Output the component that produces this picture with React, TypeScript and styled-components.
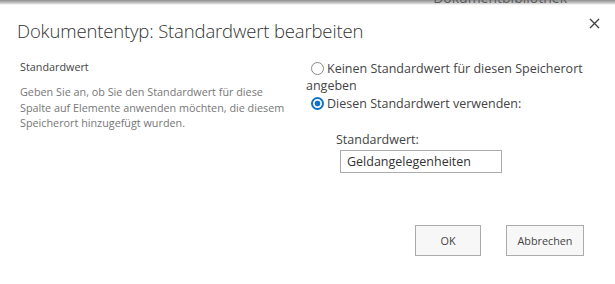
import React from "react";
import styled, { createGlobalStyle } from "styled-components";

const Global = createGlobalStyle`
  html, body { margin: 0; padding: 0; background: #fff; }
  body {
    width: 615px;
    height: 284px;
    overflow: hidden;
    font-family: "Open Sans", "Noto Sans", sans-serif;
    color: #444;
  }
`;

const BackdropStrip = styled.div`
  height: 5px;
  display: flex;
  justify-content: flex-end;
  align-items: flex-end;
  overflow: hidden;
  padding-right: 48px;
  background: linear-gradient(#8e8e8e, #c8c8c8 60%, #fff);
`;

const BehindText = styled.span`
  font-size: 14px;
  line-height: 15px;
  color: #5a5a5a;
  white-space: nowrap;
`;

const Dialog = styled.div`
  padding: 12px 15px 0 17px;
`;

const Header = styled.div`
  display: flex;
  justify-content: space-between;
  align-items: flex-start;
`;

const Title = styled.h1`
  margin: 0;
  font-weight: 300;
  font-size: 18.5px;
  line-height: 28px;
  color: #333;
  letter-spacing: -0.15px;
`;

const CloseButton = styled.button`
  border: 0;
  background: none;
  padding: 0;
  margin-top: 1px;
  width: 11px;
  height: 11px;
  display: flex;
  cursor: pointer;
`;

const Body = styled.div`
  display: grid;
  grid-template-columns: 286px 290px;
  margin-top: 15px;
  padding-left: 3px;
`;

const Info = styled.div`
  display: flex;
  flex-direction: column;
`;

const FieldName = styled.div`
  font-size: 10.8px;
  line-height: 14px;
  color: #444;
`;

const Description = styled.p`
  margin: 10px 0 0;
  font-size: 10.8px;
  line-height: 15.5px;
  color: #777;
  width: 275px;
`;

const Options = styled.div`
  display: flex;
  flex-direction: column;
  font-size: 12.5px;
  line-height: 17px;
  color: #444;
`;

const Option = styled.label`
  display: block;
  margin-bottom: 1px;
`;

const Radio = styled.span<{ $checked?: boolean }>`
  display: inline-block;
  box-sizing: border-box;
  width: 13px;
  height: 13px;
  margin: 0 3px 0 5px;
  vertical-align: -2px;
  border-radius: 50%;
  border: ${(p) => (p.$checked ? "2px solid #0f73c9" : "1.5px solid #8a8a8a")};
  background: ${(p) =>
    p.$checked
      ? "radial-gradient(circle, #0f73c9 0 2.6px, #fff 3.2px)"
      : "#fff"};
`;

const SubField = styled.div`
  display: flex;
  flex-direction: column;
  align-items: flex-start;
  padding-left: 30px;
  margin-top: 18px;
`;

const SubLabel = styled.div`
  font-size: 12.5px;
  line-height: 17px;
`;

const TextBox = styled.div`
  box-sizing: border-box;
  width: 162px;
  height: 23px;
  margin: 2px 0 0 4px;
  padding: 0 6px;
  border: 1px solid #ababab;
  font-size: 12.5px;
  line-height: 21px;
  color: #333;
`;

const Footer = styled.div`
  display: flex;
  justify-content: flex-end;
  gap: 25px;
  margin-top: 52px;
  padding-right: 16px;
`;

const Button = styled.button<{ $w: number }>`
  box-sizing: border-box;
  width: ${(p) => p.$w}px;
  height: 31px;
  border: 1px solid #ababab;
  background: #f7f7f7;
  font-family: "Open Sans", "Noto Sans", sans-serif;
  font-size: 10.8px;
  color: #444;
  padding: 0;
`;

const CloseIcon = () => (
  <svg width="11" height="11" viewBox="0 0 11 11">
    <path d="M1 1 L10 10 M10 1 L1 10" stroke="#444" strokeWidth="1.4" />
  </svg>
);

export default function App() {
  return (
    <>
      <Global />
      <BackdropStrip>
        <BehindText>Dokumentbibliothek</BehindText>
      </BackdropStrip>
      <Dialog>
        <Header>
          <Title>Dokumententyp: Standardwert bearbeiten</Title>
          <CloseButton aria-label="Schließen">
            <CloseIcon />
          </CloseButton>
        </Header>
        <Body>
          <Info>
            <FieldName>Standardwert</FieldName>
            <Description>
              Geben Sie an, ob Sie den Standardwert für diese Spalte auf
              Elemente anwenden möchten, die diesem Speicherort hinzugefügt
              wurden.
            </Description>
          </Info>
          <Options>
            <Option>
              <Radio />
              Keinen Standardwert für diesen Speicherort angeben
            </Option>
            <Option>
              <Radio $checked />
              Diesen Standardwert verwenden:
            </Option>
            <SubField>
              <SubLabel>Standardwert:</SubLabel>
              <TextBox>Geldangelegenheiten</TextBox>
            </SubField>
          </Options>
        </Body>
        <Footer>
          <Button $w={66}>OK</Button>
          <Button $w={78}>Abbrechen</Button>
        </Footer>
      </Dialog>
    </>
  );
}
